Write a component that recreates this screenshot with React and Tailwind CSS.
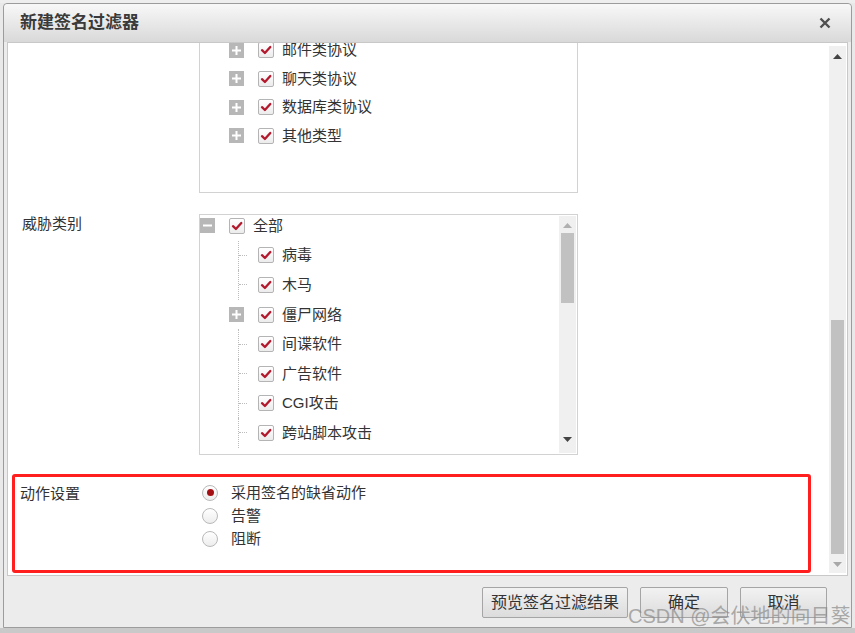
import React from 'react';

const FONT = { fontFamily: '"Liberation Sans", "Noto Sans CJK SC", sans-serif' };

function Toggle({ open }) {
  return (
    <svg width="15" height="15" viewBox="0 0 15 15" className="block">
      <rect x="0" y="0" width="15" height="15" fill="#b7b7b7" />
      <rect x="3" y="6.5" width="9" height="2" fill="#fff" />
      {!open && <rect x="6.5" y="3" width="2" height="9" fill="#fff" />}
    </svg>
  );
}

function Check() {
  return (
    <div className="w-[16px] h-[16px] shrink-0 rounded-[2px] border border-[#b4b4b4] bg-gradient-to-b from-white to-[#ececec] flex items-center justify-center">
      <svg width="12" height="12" viewBox="0 0 12 12">
        <path d="M2 6.2 L4.9 9 L10.3 3" fill="none" stroke="#b4182c" strokeWidth="2.3" strokeLinecap="round" strokeLinejoin="round" />
      </svg>
    </div>
  );
}

// 树节点一行：缩进 + 展开按钮/连接线 + 勾选框 + 文字
function TreeRow({ level = 0, kind, label, h }) {
  return (
    <div className={`flex items-center ${h}`}>
      {level > 0 && <div className="w-[29px] shrink-0" />}
      <div className="w-[29px] h-full shrink-0 flex items-center">
        {kind === 'plus' && <Toggle />}
        {kind === 'minus' && <Toggle open />}
        {kind === 'leaf' && (
          <div className="h-full flex">
            <div className="w-[9px]" />
            <div className="h-full border-l border-dotted border-[#bcbcbc] flex items-center">
              <div className="w-[8px] border-t border-dotted border-[#bcbcbc]" />
            </div>
          </div>
        )}
      </div>
      <Check />
      <span className="ml-[8px] text-[15px] leading-[20px] text-[#333] whitespace-nowrap">{label}</span>
    </div>
  );
}

function Arrow({ up, color }) {
  return (
    <svg width="9" height="5" viewBox="0 0 9 5" className="block">
      <path d={up ? 'M0 5 L4.5 0 L9 5 Z' : 'M0 0 L4.5 5 L9 0 Z'} fill={color} />
    </svg>
  );
}

function Radio({ checked, label }) {
  return (
    <div className="flex items-center h-[23px]">
      <div className="ml-[3px] w-[16px] h-[16px] rounded-full border border-[#b9b9b9] bg-gradient-to-b from-white to-[#ededed] flex items-center justify-center">
        {checked && <div className="w-[7px] h-[7px] rounded-full bg-[#a30f12]" />}
      </div>
      <span className="ml-[13px] text-[15px] leading-[20px] text-[#333]">{label}</span>
    </div>
  );
}

function Button({ children, w }) {
  return (
    <button className={`${w} h-[31px] rounded-[2px] border border-[#a5a5a5] bg-gradient-to-b from-[#f2f2f2] to-[#dcdcdc] text-[16px] leading-[20px] text-[#333]`}>
      {children}
    </button>
  );
}

export default function App() {
  const protocols = ['邮件类协议', '聊天类协议', '数据库类协议', '其他类型'];
  const threats = [
    { level: 0, kind: 'minus', label: '全部' },
    { level: 1, kind: 'leaf', label: '病毒' },
    { level: 1, kind: 'leaf', label: '木马' },
    { level: 1, kind: 'plus', label: '僵尸网络' },
    { level: 1, kind: 'leaf', label: '间谍软件' },
    { level: 1, kind: 'leaf', label: '广告软件' },
    { level: 1, kind: 'leaf', label: 'CGI攻击' },
    { level: 1, kind: 'leaf', label: '跨站脚本攻击' },
  ];

  return (
    <div style={FONT} className="relative w-[855px] h-[633px] overflow-hidden bg-[#e9e9e9] flex flex-col">
      <div className="h-[3px] shrink-0 bg-[#eeeeee]" />
      <div className="mx-[3px] h-[625px] shrink-0 flex flex-col rounded-t-[4px] border border-[#9c9c9c] bg-[#ececec]">
        {/* 标题栏 */}
        <div className="h-[38px] shrink-0 rounded-t-[4px] bg-gradient-to-b from-[#f8f8f8] to-[#d9d9d9] flex items-center justify-between pl-[16px] pr-[20px]">
          <span className="text-[17px] leading-[22px] font-bold text-[#3a3a3a]">新建签名过滤器</span>
          <svg width="12" height="12" viewBox="0 0 12 12">
            <path d="M1.5 1.5 L10.5 10.5 M10.5 1.5 L1.5 10.5" stroke="#505050" strokeWidth="2.4" />
          </svg>
        </div>

        {/* 内容区 */}
        <div className="mx-[3px] h-[534px] shrink-0 border border-[#c8c8c8] bg-white flex">
          <div className="flex-1 overflow-hidden flex flex-col">
            {/* 协议类别（已滚动） */}
            <div className="-mt-[7px] flex">
              <div className="w-[191px] shrink-0" />
              <div className="w-[379px] border-x border-b border-[#d2d2d2] pl-[29px] pb-[42px]">
                {protocols.map((p) => (
                  <TreeRow key={p} kind="plus" label={p} h="h-[28.5px]" />
                ))}
              </div>
            </div>

            {/* 威胁类别 */}
            <div className="mt-[21px] flex">
              <div className="w-[191px] shrink-0 pl-[14px] text-[15px] leading-[20px] text-[#333]">威胁类别</div>
              <div className="w-[379px] h-[241px] border border-[#d2d2d2] flex">
                <div className="flex-1 overflow-hidden">
                  <div className="-mt-[4px]">
                    {threats.map((t) => (
                      <TreeRow key={t.label} {...t} h="h-[29.6px]" />
                    ))}
                  </div>
                </div>
                <div className="w-[17px] my-[1px] mr-[1px] bg-[#f0f0f0] flex flex-col items-center">
                  <div className="mt-[7px]"><Arrow up color="#b0b0b0" /></div>
                  <div className="mt-[5px] w-[13px] h-[70px] bg-[#c1c1c1]" />
                  <div className="flex-1" />
                  <div className="mb-[11px]"><Arrow color="#444" /></div>
                </div>
              </div>
            </div>

            {/* 动作设置 */}
            <div className="mt-[19px] ml-[4px] w-[799px] h-[99px] border-[3px] border-[#ff1f1f] rounded-[3px] flex">
              <div className="w-[184px] shrink-0 pl-[5px] pt-[7px] text-[15px] leading-[20px] text-[#333]">动作设置</div>
              <div className="pt-[4px] flex flex-col">
                <Radio checked label="采用签名的缺省动作" />
                <Radio label="告警" />
                <Radio label="阻断" />
              </div>
            </div>
          </div>

          {/* 主滚动条 */}
          <div className="w-[17px] mt-[3px] mb-[2px] mr-[1px] bg-[#f0f0f0] flex flex-col items-center">
            <div className="mt-[8px]"><Arrow up color="#444" /></div>
            <div className="flex-1" />
            <div className="w-[13px] h-[234px] bg-[#c1c1c1]" />
            <div className="mt-[8px] mb-[6px]"><Arrow color="#a8a8a8" /></div>
          </div>
        </div>

        {/* 按钮栏 */}
        <div className="flex-1 flex justify-end items-start pt-[11px] pr-[24px] gap-[12px]">
          <Button w="w-[146px]">预览签名过滤结果</Button>
          <Button w="w-[88px]">确定</Button>
          <Button w="w-[87px]">取消</Button>
        </div>
      </div>
      <div className="flex-1 bg-[#c9c9c9]" />

      {/* 水印 */}
      <div className="absolute left-[628px] top-[604px] text-[20px] leading-[24px] text-[#8a8a8a]/70 whitespace-nowrap">
        CSDN @会伏地的向日葵
      </div>
    </div>
  );
}
